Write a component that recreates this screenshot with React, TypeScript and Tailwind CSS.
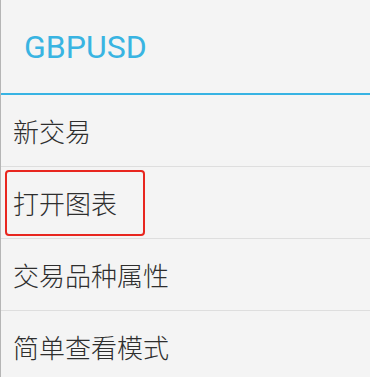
import React from "react";

const cjk = { fontFamily: '"Noto Sans CJK SC", "Noto Sans", sans-serif' };

export default function App() {
  const rows = ["新交易", "打开图表", "交易品种属性", "简单查看模式"];
  return (
    <div className="w-[370px] h-[377px] overflow-hidden bg-[#f4f4f4] border-l border-[#b5b5b5] flex flex-col">
      <div
        className="h-[93px] shrink-0 flex items-center pl-[23px] pt-[1px] text-[32px] text-[#39b4e2]"
        style={{ fontFamily: "Roboto, sans-serif" }}
      >
        GBPUSD
      </div>
      <div className="h-[2px] shrink-0 bg-[#37b3e3]" />
      {rows.map((r, i) => (
        <div
          key={r}
          className="relative h-[72px] shrink-0 flex items-center pl-[12px] border-b border-[#dedede] text-[26px] font-light text-[#2e2e2e]"
          style={cjk}
        >
          {r}
          {i === 1 && (
            <div className="absolute left-[4px] top-[3px] w-[140px] h-[66px] border-[2.5px] border-[#e8261f] rounded-[4px]" />
          )}
        </div>
      ))}
    </div>
  );
}
